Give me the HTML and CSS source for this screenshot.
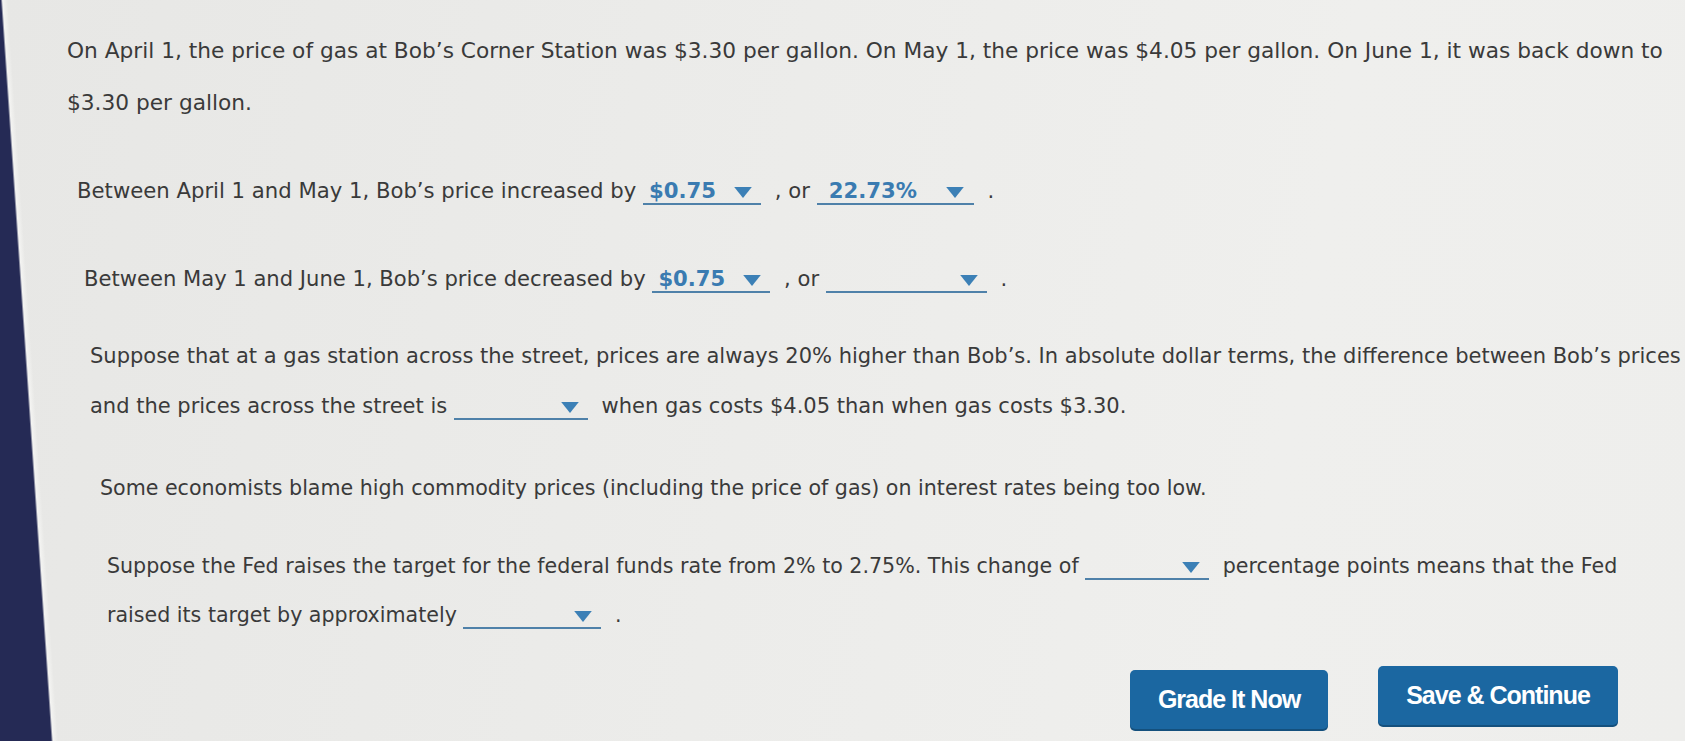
FILE: index.html
```html
<!DOCTYPE html>
<html lang="en">
<head>
<meta charset="utf-8">
<title>Gas prices question</title>
<link rel="stylesheet" href="styles.css">
</head>
<body>
<main class="page">
  <p class="para p1">On April 1, the price of gas at Bob’s Corner Station was $3.30 per gallon. On May 1, the price was $4.05 per gallon. On June 1, it was back down to $3.30 per gallon.</p>

  <p class="para p2">Between April 1 and May 1, Bob’s price increased by <span class="dd w-a"><span class="dd-val">$0.75</span><svg class="caret" viewBox="0 0 16 10"><polygon points="0,0 16,0 8,10"/></svg></span> , or <span class="dd w-b"><span class="dd-val">22.73%</span><svg class="caret" viewBox="0 0 16 10"><polygon points="0,0 16,0 8,10"/></svg></span> .</p>

  <p class="para p3">Between May 1 and June 1, Bob’s price decreased by <span class="dd w-a"><span class="dd-val">$0.75</span><svg class="caret" viewBox="0 0 16 10"><polygon points="0,0 16,0 8,10"/></svg></span> , or <span class="dd w-c"><span class="dd-val">&nbsp;</span><svg class="caret" viewBox="0 0 16 10"><polygon points="0,0 16,0 8,10"/></svg></span> .</p>

  <p class="para p4">Suppose that at a gas station across the street, prices are always 20% higher than Bob’s. In absolute dollar terms, the difference between Bob’s prices and the prices across the street is <span class="dd w-d"><span class="dd-val">&nbsp;</span><svg class="caret" viewBox="0 0 16 10"><polygon points="0,0 16,0 8,10"/></svg></span> when gas costs $4.05 than when gas costs $3.30.</p>

  <p class="para p5">Some economists blame high commodity prices (including the price of gas) on interest rates being too low.</p>

  <p class="para p6">Suppose the Fed raises the target for the federal funds rate from 2% to 2.75%. This change of <span class="dd w-e"><span class="dd-val">&nbsp;</span><svg class="caret" viewBox="0 0 16 10"><polygon points="0,0 16,0 8,10"/></svg></span> percentage points means that the Fed raised its target by approximately <span class="dd w-f"><span class="dd-val">&nbsp;</span><svg class="caret" viewBox="0 0 16 10"><polygon points="0,0 16,0 8,10"/></svg></span> .</p>

  <div class="actions">
    <button class="btn btn-grade" type="button">Grade It Now</button>
    <button class="btn btn-save" type="button">Save &amp; Continue</button>
  </div>
</main>
</body>
</html>
```
FILE: styles.css
```css
html, body {
  margin: 0;
  padding: 0;
}
body {
  width: 1685px;
  height: 741px;
  overflow: hidden;
  background:
    linear-gradient(86.1deg, #252a55 51px, #f4f4f2 53px, rgba(240,240,238,0) 58px),
    linear-gradient(100deg, #e7e7e5 0%, #ececea 45%, #efefed 75%, #eeeeec 100%);
  font-family: "DejaVu Sans", Verdana, sans-serif;
  color: #3a3a3a;
}
.page {
  padding-top: 25px;
}
.para {
  margin: 0;
  line-height: 50px;
}
.p1 { font-size: 21.7px; line-height: 52px; padding-left: 67px; padding-right: 10px; }
.p2 { font-size: 21.2px; margin-top: 37px; padding-left: 77px; }
.p3 { font-size: 21.1px; margin-top: 38px; padding-left: 84px; }
.p4 { font-size: 21px; margin-top: 27px; margin-right: -14px; padding-left: 90px; padding-right: 0; }
.p5 { font-size: 20.6px; margin-top: 32px; padding-left: 100px; }
.p6 { font-size: 20.6px; line-height: 49px; margin-top: 29px; padding-left: 107px; padding-right: 45px; }

.dd {
  display: inline-flex;
  align-items: baseline;
  justify-content: space-between;
  box-sizing: border-box;
  padding: 0 8px 0 6px;
  margin-right: 7px;
  border-bottom: 2px solid #4f81a9;
  line-height: 22px;
}
.dd-val {
  color: #3a7bb1;
  font-weight: bold;
}
.caret {
  width: 20px;
  height: 11px;
  margin-bottom: 5px;
  fill: #3c80b6;
}
.w-a { width: 118px; }
.w-b { width: 157px; padding-left: 12px; padding-right: 9px; }
.w-c { width: 161px; }
.w-d { width: 134px; }
.w-e { width: 124px; }
.w-f { width: 138px; }

.actions {
  margin-top: 26px;
  display: flex;
  justify-content: flex-end;
  align-items: flex-start;
  gap: 50px;
  padding-right: 67px;
}
.btn {
  height: 59px;
  border: none;
  border-radius: 5px;
  background: #1b67a1;
  color: #ffffff;
  font-family: "Liberation Sans", Arial, sans-serif;
  font-weight: bold;
  font-size: 25px;
  letter-spacing: -1px;
  box-shadow: 0 2px 0 #14507d;
  padding: 0;
}
.btn-grade { width: 198px; margin-top: 4px; }
.btn-save { width: 240px; }
```
